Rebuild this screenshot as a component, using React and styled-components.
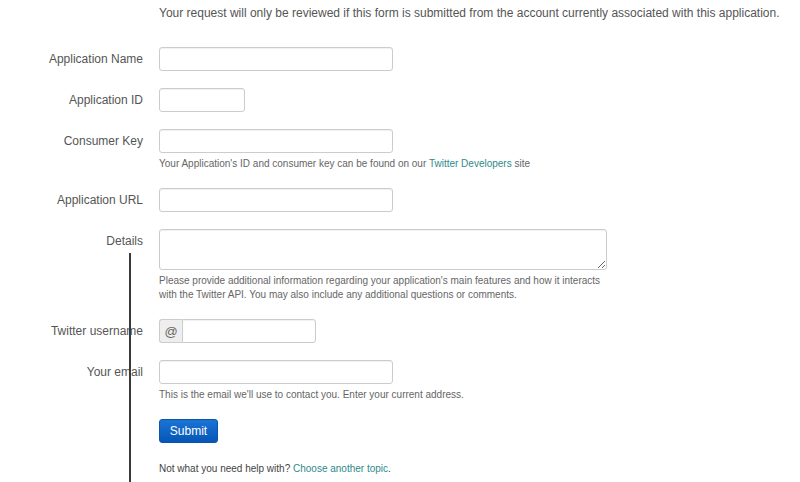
import React from "react";
import styled, { createGlobalStyle } from "styled-components";

const GlobalStyle = createGlobalStyle`
  body {
    margin: 0;
    background: #ffffff;
    font-family: "Liberation Sans", Arial, sans-serif;
  }
`;

export default function App() {
  const fields = [
    { label: "Application Name", width: 234 },
    { label: "Application ID", width: 86 },
    {
      label: "Consumer Key",
      width: 234,
      help: (
        <>
          Your Application's ID and consumer key can be found on our{" "}
          <Link href="#">Twitter Developers</Link> site
        </>
      ),
    },
    { label: "Application URL", width: 234 },
    {
      label: "Details",
      area: true,
      help: (
        <>
          Please provide additional information regarding your application's main features and how it interacts
          <br />
          with the Twitter API. You may also include any additional questions or comments.
        </>
      ),
    },
    { label: "Twitter username", width: 134, prefix: "@" },
    {
      label: "Your email",
      width: 234,
      help: "This is the email we'll use to contact you. Enter your current address.",
    },
  ];

  return (
    <Page>
      <GlobalStyle />
      <Intro>
        Your request will only be reviewed if this form is submitted from the account currently associated with this application.
      </Intro>
      <Form>
        {fields.map((f) => (
          <Row key={f.label}>
            <Label>{f.label}</Label>
            <Controls>
              {f.area ? (
                <TextArea />
              ) : f.prefix ? (
                <Group>
                  <Addon>{f.prefix}</Addon>
                  <Input $width={f.width} $joined />
                </Group>
              ) : (
                <Input $width={f.width} />
              )}
              {f.help && <Help>{f.help}</Help>}
            </Controls>
          </Row>
        ))}
        <Row>
          <Label />
          <Controls>
            <Button>Submit</Button>
            <Footer>
              Not what you need help with? <Link href="#">Choose another topic</Link>.
            </Footer>
          </Controls>
        </Row>
      </Form>
      <Cursor />
    </Page>
  );
}

const Page = styled.div`
  position: relative;
  width: 800px;
  height: 482px;
  overflow: hidden;
  padding-top: 5px;
  box-sizing: border-box;
`;

const Intro = styled.p`
  margin: 0 0 26px 159px;
  font-size: 12px;
  line-height: 16px;
  color: #555555;
  white-space: nowrap;
`;

const Form = styled.div`
  display: flex;
  flex-direction: column;
  gap: 17px;
`;

const Row = styled.div`
  display: flex;
  gap: 16px;
`;

const Label = styled.div`
  width: 143px;
  flex-shrink: 0;
  text-align: right;
  font-size: 12px;
  line-height: 24px;
  color: #555555;
`;

const Controls = styled.div`
  display: flex;
  flex-direction: column;
  align-items: flex-start;
`;

const Input = styled.input`
  width: ${(p) => p.$width}px;
  height: 24px;
  box-sizing: border-box;
  border: 1px solid #cccccc;
  border-radius: ${(p) => (p.$joined ? "0 3px 3px 0" : "3px")};
  box-shadow: inset 0 1px 1px rgba(0, 0, 0, 0.06);
  background: #ffffff;
  margin: 0;
  padding: 2px 6px;
  font-size: 12px;
`;

const TextArea = styled.textarea`
  width: 448px;
  height: 41px;
  box-sizing: border-box;
  border: 1px solid #cccccc;
  border-radius: 3px;
  box-shadow: inset 0 1px 1px rgba(0, 0, 0, 0.06);
  margin: 0;
  padding: 2px 6px;
  display: block;
`;

const Group = styled.div`
  display: flex;
`;

const Addon = styled.span`
  width: 23px;
  height: 24px;
  box-sizing: border-box;
  border: 1px solid #cccccc;
  border-right: none;
  border-radius: 3px 0 0 3px;
  background: #eeeeee;
  color: #666666;
  font-size: 13px;
  display: flex;
  align-items: center;
  justify-content: center;
`;

const Help = styled.p`
  margin: 4px 0 0;
  font-size: 10px;
  line-height: 14px;
  color: #666666;
  white-space: nowrap;
`;

const Link = styled.a`
  color: #2e8a8a;
  text-decoration: none;
`;

const Button = styled.button`
  width: 59px;
  height: 24px;
  border: 1px solid #0b55a8;
  border-radius: 3px;
  background: linear-gradient(#1a74d6, #0656b6);
  color: #ffffff;
  font-family: "Liberation Sans", Arial, sans-serif;
  font-size: 12px;
  padding: 0;
`;

const Footer = styled.p`
  margin: 19px 0 0;
  font-size: 10px;
  line-height: 14px;
  color: #444444;
  white-space: nowrap;
`;

const Cursor = styled.div`
  position: absolute;
  left: 129px;
  top: 253px;
  width: 2px;
  height: 229px;
  background: #3a3a3a;
`;
